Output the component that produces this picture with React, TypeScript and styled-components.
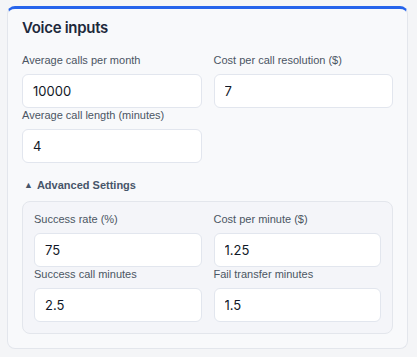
import React from "react";
import styled, { createGlobalStyle } from "styled-components";

const GlobalStyle = createGlobalStyle`
  html, body {
    margin: 0;
    padding: 0;
    background: #f4f5f7;
  }
  * { box-sizing: border-box; }
`;

const Page = styled.div`
  padding: 6px 9px 8px 7px;
  width: 417px;
  font-family: "Liberation Sans", Arial, sans-serif;
`;

const Card = styled.section`
  width: 401px;
  background: #f8f9fb;
  border: 1px solid #e3e6ec;
  border-top: 3px solid #2563eb;
  border-radius: 8px;
  padding: 7px 14px 14px;
`;

const Title = styled.h2`
  margin: 0 0 13px;
  font-family: Inter, "Noto Sans", sans-serif;
  font-size: 15px;
  letter-spacing: -0.3px;
  line-height: 24px;
  font-weight: 600;
  color: #1e293b;
`;

const Grid = styled.div`
  display: grid;
  grid-template-columns: 1fr 1fr;
  column-gap: 12px;
  row-gap: 0;
`;

const Field = styled.label`
  display: flex;
  flex-direction: column;
`;

const Label = styled.span`
  font-size: 11px;
  line-height: 15px;
  color: #4b5563;
  margin-bottom: 6px;
`;

const Input = styled.input`
  height: 34px;
  width: 100%;
  border: 1px solid #e2e6ee;
  border-radius: 6px;
  background: #ffffff;
  padding: 0 10px;
  font-family: Inter, "Noto Sans", sans-serif;
  font-size: 13px;
  color: #111827;
  outline: none;
`;

const Toggle = styled.div`
  display: flex;
  align-items: center;
  gap: 4px;
  margin: 14px 0 8px 2px;
  font-size: 11px;
  line-height: 16px;
  font-weight: 700;
  color: #475569;
`;

const Caret = styled.span`
  font-size: 9px;
  line-height: 1;
`;

const Advanced = styled.div`
  background: #f4f5f9;
  border: 1px solid #e3e6ec;
  border-radius: 8px;
  padding: 10px 11px 11px;
`;

type F = { label: string; value: string };

const main: F[] = [
  { label: "Average calls per month", value: "10000" },
  { label: "Cost per call resolution ($)", value: "7" },
  { label: "Average call length (minutes)", value: "4" },
];

const adv: F[] = [
  { label: "Success rate (%)", value: "75" },
  { label: "Cost per minute ($)", value: "1.25" },
  { label: "Success call minutes", value: "2.5" },
  { label: "Fail transfer minutes", value: "1.5" },
];

const Fields = ({ items }: { items: F[] }) => (
  <Grid>
    {items.map((f) => (
      <Field key={f.label}>
        <Label>{f.label}</Label>
        <Input defaultValue={f.value} />
      </Field>
    ))}
  </Grid>
);

export default function App() {
  return (
    <>
      <GlobalStyle />
      <Page>
        <Card>
          <Title>Voice inputs</Title>
          <Fields items={main} />
          <Toggle>
            <Caret>▲</Caret>
            Advanced Settings
          </Toggle>
          <Advanced>
            <Fields items={adv} />
          </Advanced>
        </Card>
      </Page>
    </>
  );
}
